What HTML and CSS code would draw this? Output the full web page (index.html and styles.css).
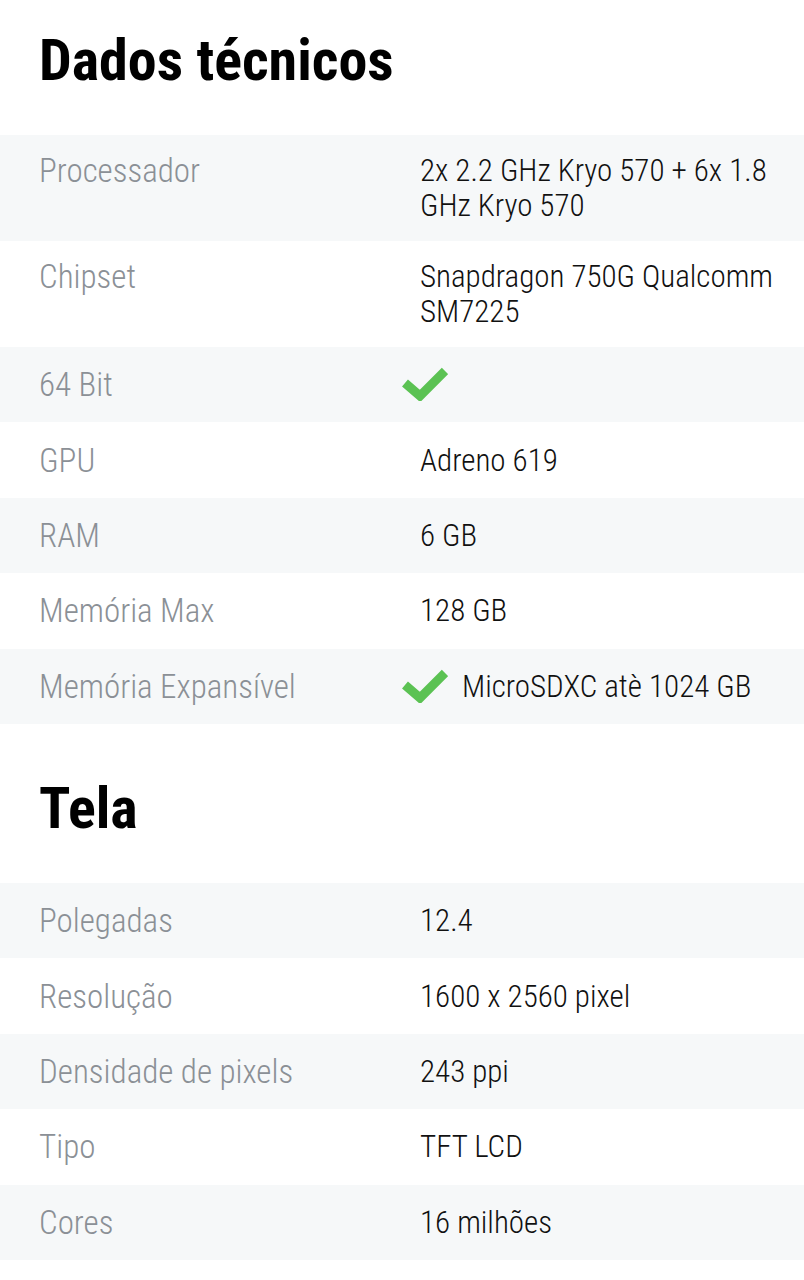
FILE: index.html
```html
<!DOCTYPE html>
<html lang="pt">
<head>
    <meta charset="UTF-8">
    <meta name="viewport" content="width=device-width, initial-scale=1.0">
    <title>Dados técnicos</title>
    <link rel="stylesheet" href="styles.css">
</head>
<body>
    <section class="specs">
        <h2 class="specs-title">Dados técnicos</h2>
        <div class="spec-row">
            <div class="spec-label">Processador</div>
            <div class="spec-value">2x 2.2 GHz Kryo 570 + 6x 1.8 GHz Kryo 570</div>
        </div>
        <div class="spec-row">
            <div class="spec-label">Chipset</div>
            <div class="spec-value">Snapdragon 750G Qualcomm SM7225</div>
        </div>
        <div class="spec-row">
            <div class="spec-label">64 Bit</div>
            <div class="spec-value">
                <svg class="check" viewBox="0 0 46 34" width="46" height="34"><polyline points="3,16 18,29 43,4"/></svg>
            </div>
        </div>
        <div class="spec-row">
            <div class="spec-label">GPU</div>
            <div class="spec-value">Adreno 619</div>
        </div>
        <div class="spec-row">
            <div class="spec-label">RAM</div>
            <div class="spec-value">6 GB</div>
        </div>
        <div class="spec-row">
            <div class="spec-label">Memória Max</div>
            <div class="spec-value">128 GB</div>
        </div>
        <div class="spec-row">
            <div class="spec-label">Memória Expansível</div>
            <div class="spec-value">
                <svg class="check" viewBox="0 0 46 34" width="46" height="34"><polyline points="3,16 18,29 43,4"/></svg>
                <span>MicroSDXC atè 1024 GB</span>
            </div>
        </div>
    </section>

    <section class="specs">
        <h2 class="specs-title">Tela</h2>
        <div class="spec-row">
            <div class="spec-label">Polegadas</div>
            <div class="spec-value">12.4</div>
        </div>
        <div class="spec-row">
            <div class="spec-label">Resolução</div>
            <div class="spec-value">1600 x 2560 pixel</div>
        </div>
        <div class="spec-row">
            <div class="spec-label">Densidade de pixels</div>
            <div class="spec-value">243 ppi</div>
        </div>
        <div class="spec-row">
            <div class="spec-label">Tipo</div>
            <div class="spec-value">TFT LCD</div>
        </div>
        <div class="spec-row">
            <div class="spec-label">Cores</div>
            <div class="spec-value">16 milhões</div>
        </div>
    </section>
</body>
</html>
```
FILE: styles.css
```css
body {
    margin: 0;
    background-color: #fff;
    font-family: "Roboto Condensed", Roboto, sans-serif;
    color: #111;
}
.specs + .specs {
    margin-top: 24px;
}
.specs-title {
    margin: 0;
    padding: 24px 39px 39px;
    font-size: 58px;
    line-height: 72px;
    font-weight: 700;
    color: #000;
}
.spec-row {
    display: grid;
    grid-template-columns: 381px 1fr;
    align-content: center;
    align-items: start;
    min-height: 75.4px;
    box-sizing: border-box;
    padding: 18px 16px 18px 39px;
    line-height: 35px;
    font-weight: 300;
}
.spec-row:nth-of-type(odd) {
    background-color: #f6f8f9;
}
.spec-label {
    font-size: 33px;
    color: #8b9096;
}
.spec-value {
    display: flex;
    align-items: center;
    gap: 14px;
    font-size: 31px;
}
.check {
    display: block;
    margin-left: -18px;
    flex-shrink: 0;
}
.check polyline {
    fill: none;
    stroke: #5bc253;
    stroke-width: 9;
    stroke-linejoin: miter;
}
```
